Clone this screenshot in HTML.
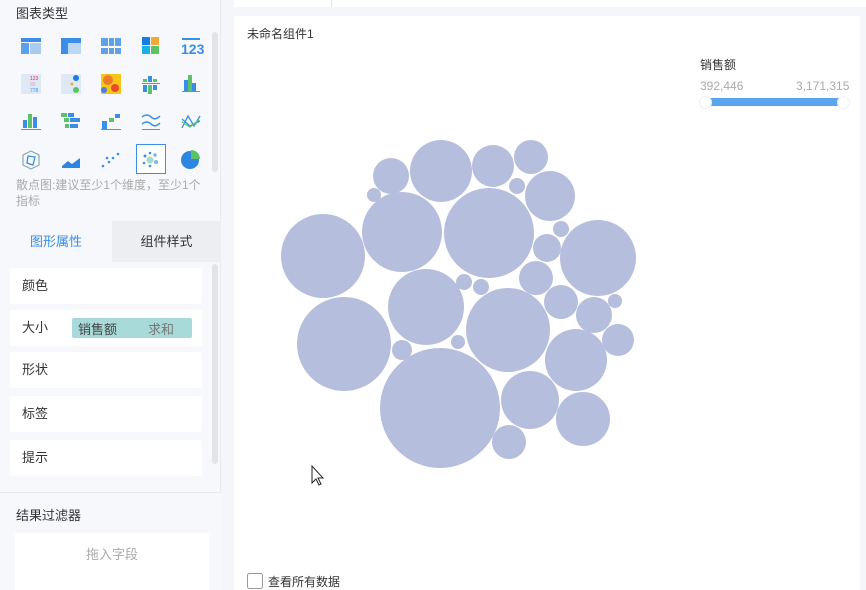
<!DOCTYPE html>
<html><head><meta charset="utf-8"><style>
*{margin:0;padding:0;box-sizing:border-box}
body{width:866px;height:590px;overflow:hidden;background:#f4f6f9;font-family:"Liberation Sans","Noto Sans CJK SC",sans-serif;font-size:12px;color:#333;position:relative}
.abs{position:absolute}
.left{left:0;top:0;width:221px;height:590px;background:#f6f8fb;border-right:1px solid #e8eaee}
.item{position:absolute;left:10px;width:192px;height:36px;background:#fff;border-radius:2px}
.item span{position:absolute;left:12px;top:7px;font-size:13px;color:#333}
</style></head><body>
<div class="abs left">
  <div class="abs" style="left:16px;top:3px;font-size:13px">图表类型</div>
  <div class="abs" style="left:212px;top:32px;width:6px;height:140px;background:#e2e4e8;border-radius:3px"></div>
  <svg class="abs" style="left:0;top:0" width="221" height="180">
    <rect x="21" y="38" width="20" height="4" fill="#3a8ee6"/><rect x="21" y="43" width="8" height="11" fill="#5aa0ea"/><rect x="30" y="43" width="11" height="11" fill="#a9cbf0"/>
    <rect x="61" y="38" width="20" height="16" fill="#3a8ee6"/><rect x="68" y="43" width="13" height="11" fill="#bcd6f3"/>
    <rect x="101" y="38" width="20" height="16" fill="#5ea2ea"/><rect x="101" y="46" width="20" height="2" fill="#fff"/><rect x="108" y="38" width="1" height="16" fill="#fff"/><rect x="114" y="38" width="1" height="16" fill="#fff"/>
    <rect x="142" y="37" width="8" height="8" fill="#1a7de0"/><rect x="151" y="37" width="8" height="8" fill="#f2a93b"/><rect x="142" y="46" width="8" height="8" fill="#1ab0e8"/><rect x="151" y="46" width="8" height="8" fill="#5cc26a"/>
    <rect x="182" y="38" width="18" height="2" fill="#3a8ee6"/><text x="181" y="54" font-size="14" font-weight="bold" fill="#3a8ee6" font-family="Liberation Sans Narrow,Liberation Sans">123</text>
    <rect x="21" y="74" width="20" height="20" fill="#dfe8f5"/><text x="30" y="80" font-size="5" fill="#e25">123</text><text x="30" y="86" font-size="5" fill="#e9a">80</text><text x="30" y="92" font-size="5" fill="#39e">778</text>
    <rect x="61" y="74" width="20" height="20" fill="#dfe8f5"/><circle cx="76" cy="78" r="3" fill="#1a7de0"/><circle cx="76" cy="90" r="3" fill="#5cc26a"/><circle cx="72" cy="84" r="1.5" fill="#f2a93b"/>
    <rect x="101" y="74" width="20" height="20" fill="#f5c518"/><circle cx="108" cy="80" r="5" fill="#ef7a2a"/><circle cx="115" cy="88" r="4" fill="#e84a2a"/><circle cx="104" cy="90" r="3" fill="#4a7fe0"/>
    <rect x="148" y="76" width="4" height="6" fill="#3a8ee6"/><rect x="142" y="83" width="18" height="1" fill="#888"/><rect x="143" y="79" width="4" height="3" fill="#5cc26a"/><rect x="153" y="79" width="4" height="3" fill="#5cc26a"/><rect x="143" y="85" width="4" height="7" fill="#3a8ee6"/><rect x="148" y="85" width="4" height="9" fill="#5cc26a"/><rect x="153" y="85" width="4" height="5" fill="#3a8ee6"/>
    <rect x="184" y="80" width="4" height="11" fill="#3a8ee6"/><rect x="188" y="75" width="4" height="16" fill="#5cc26a"/><rect x="192" y="83" width="4" height="8" fill="#3a8ee6"/><rect x="182" y="91" width="18" height="1" fill="#888"/>
    <rect x="23" y="120" width="4" height="8" fill="#3a8ee6"/><rect x="28" y="114" width="4" height="14" fill="#5cc26a"/><rect x="33" y="117" width="4" height="11" fill="#3a8ee6"/><rect x="21" y="129" width="20" height="1" fill="#888"/>
    <rect x="61" y="113" width="6" height="4" fill="#5cc26a"/><rect x="68" y="113" width="6" height="4" fill="#3a8ee6"/><rect x="64" y="118" width="5" height="4" fill="#5cc26a"/><rect x="70" y="118" width="10" height="4" fill="#3a8ee6"/><rect x="65" y="124" width="4" height="4" fill="#5cc26a"/><rect x="70" y="124" width="8" height="4" fill="#3a8ee6"/>
    <rect x="102" y="121" width="5" height="8" fill="#3a8ee6"/><rect x="109" y="118" width="5" height="4" fill="#5cc26a"/><rect x="115" y="114" width="5" height="4" fill="#3a8ee6"/><rect x="101" y="129" width="20" height="1" fill="#888"/>
    <path d="M142 117q5-4 9 0t9-1M142 124q5-4 9 0t9-1" stroke="#3a8ee6" fill="none" stroke-width="1.5"/><rect x="142" y="129" width="18" height="1" fill="#888"/>
    <path d="M182 128l6-12 6 10 6-10M182 119l8 7 10-5" stroke="#3a8ee6" fill="none" stroke-width="1.3"/><path d="M182 122l8 5 9-7" stroke="#5cc26a" fill="none" stroke-width="1.3"/>
    <polygon points="31,151 39,155 39,165 31,169 23,165 23,155" fill="none" stroke="#8aa" stroke-width="1.2"/><polygon points="28,156 35,157 33,165 27,163" fill="none" stroke="#3a8ee6" stroke-width="1.3"/>
    <path d="M62 166l6-5 4 3 8-6v10h-18z" fill="#2f86e0"/>
    <circle cx="103" cy="166" r="1.3" fill="#3a8ee6"/><circle cx="109" cy="162" r="1.3" fill="#3a8ee6"/><circle cx="113" cy="158" r="1.3" fill="#3a8ee6"/><circle cx="118" cy="154" r="1.3" fill="#3a8ee6"/><circle cx="107" cy="158" r="1.3" fill="#3a8ee6"/>
    <rect x="136.5" y="144.5" width="29" height="29" fill="#fff" stroke="#3a8ee6"/><circle cx="150" cy="160" r="3.5" fill="#a8d8d0"/><circle cx="145" cy="156" r="1.5" fill="#3a8ee6"/><circle cx="155" cy="155" r="1.8" fill="#7bb6ee"/><circle cx="156" cy="162" r="2" fill="#7bb6ee"/><circle cx="144" cy="163" r="1.3" fill="#3a8ee6"/><circle cx="150" cy="166" r="1.3" fill="#3a8ee6"/><circle cx="150" cy="153" r="1.3" fill="#3a8ee6"/>
    <circle cx="190" cy="160" r="9" fill="#2f86e0"/><path d="M191 150a9 9 0 0 1 9 9h-9z" fill="#5cc26a"/>
  </svg>
  <div class="abs" style="left:16px;top:177px;font-size:12px;color:#aaa;line-height:16px;width:192px">散点图:建议至少1个维度，至少1个指标</div>
  <div class="abs" style="left:0;top:221px;width:221px;height:41px;background:#eceef1"></div>
  <div class="abs" style="left:0;top:221px;width:112px;height:41px;background:#f6f8fb;color:#3a8ee6;font-size:13px;text-align:center;line-height:41px">图形属性</div>
  <div class="abs" style="left:112px;top:221px;width:109px;height:41px;text-align:center;line-height:41px;font-size:13px">组件样式</div>
  <div class="abs" style="left:212px;top:264px;width:6px;height:200px;background:#e2e4e8;border-radius:3px"></div>
  <div class="item" style="top:268px"><span>颜色</span></div>
  <div class="item" style="top:310px"><span>大小</span><div class="abs" style="left:62px;top:8px;width:120px;height:20px;background:#a7dad8;border-radius:2px"><span style="left:6px;top:1px;font-size:13px;color:#444">销售额</span><span style="left:76px;top:1px;font-size:13px;color:#777">求和</span></div></div>
  <div class="item" style="top:352px"><span>形状</span></div>
  <div class="item" style="top:396px"><span>标签</span></div>
  <div class="item" style="top:440px"><span>提示</span></div>
  <div class="abs" style="left:0;top:492px;width:221px;height:98px;background:#f6f8fb;border-top:1px solid #e8eaee"></div>
  <div class="abs" style="left:16px;top:505px;font-size:13px">结果过滤器</div>
  <div class="abs" style="left:15px;top:533px;width:194px;height:57px;background:#fff;color:#aaa;font-size:13px;text-align:center;padding-top:11px">拖入字段</div>
</div>
<div class="abs" style="left:234px;top:0;width:632px;height:7px;background:#fff"></div>
<div class="abs" style="left:331px;top:0;width:1px;height:7px;background:#e5e5e5"></div>
<div class="abs" style="left:234px;top:16px;width:626px;height:574px;background:#fff"></div>
<div class="abs" style="left:247px;top:25px;font-size:12px">未命名组件1</div>
<div class="abs" style="left:700px;top:56px;font-size:12px">销售额</div>
<div class="abs" style="left:700px;top:79px;font-size:12px;color:#aaa">392,446</div>
<div class="abs" style="left:796px;top:79px;font-size:12px;color:#aaa">3,171,315</div>
<div class="abs" style="left:706px;top:98px;width:140px;height:8px;background:#5aa6ee"></div>
<div class="abs" style="left:699px;top:96px;width:13px;height:13px;border-radius:50%;background:#fff;border:1px solid #eef"></div>
<div class="abs" style="left:837px;top:96px;width:13px;height:13px;border-radius:50%;background:#fff;border:1px solid #eef"></div>
<svg class="abs" style="left:0;top:0" width="866" height="590"><g fill="#b5bedd">
<circle cx="323" cy="256" r="42"/><circle cx="344" cy="344" r="47"/><circle cx="440" cy="408" r="60"/><circle cx="402" cy="232" r="40"/><circle cx="489" cy="233" r="45"/><circle cx="441" cy="171" r="31"/><circle cx="493" cy="166" r="21"/><circle cx="531" cy="157" r="17"/><circle cx="391" cy="176" r="18"/><circle cx="374" cy="195" r="7"/><circle cx="550" cy="196" r="25"/><circle cx="517" cy="186" r="8"/><circle cx="598" cy="258" r="38"/><circle cx="426" cy="307" r="38"/><circle cx="508" cy="330" r="42"/><circle cx="536" cy="278" r="17"/><circle cx="547" cy="248" r="14"/><circle cx="561" cy="229" r="8"/><circle cx="464" cy="282" r="8"/><circle cx="481" cy="287" r="8"/><circle cx="561" cy="302" r="17"/><circle cx="594" cy="315" r="18"/><circle cx="615" cy="301" r="7"/><circle cx="618" cy="340" r="16"/><circle cx="576" cy="360" r="31"/><circle cx="530" cy="400" r="29"/><circle cx="583" cy="419" r="27"/><circle cx="509" cy="442" r="17"/><circle cx="402" cy="350" r="10"/><circle cx="458" cy="342" r="7"/>
</g>
<path d="M312 466v17l4-4 3 6 2-1-3-6h5z" fill="#fff" stroke="#222" stroke-width="1"/>
<rect x="247.5" y="573.5" width="15" height="15" rx="2" fill="#fff" stroke="#999"/>
</svg>
<div class="abs" style="left:268px;top:573px;font-size:12px">查看所有数据</div>
</body></html>
